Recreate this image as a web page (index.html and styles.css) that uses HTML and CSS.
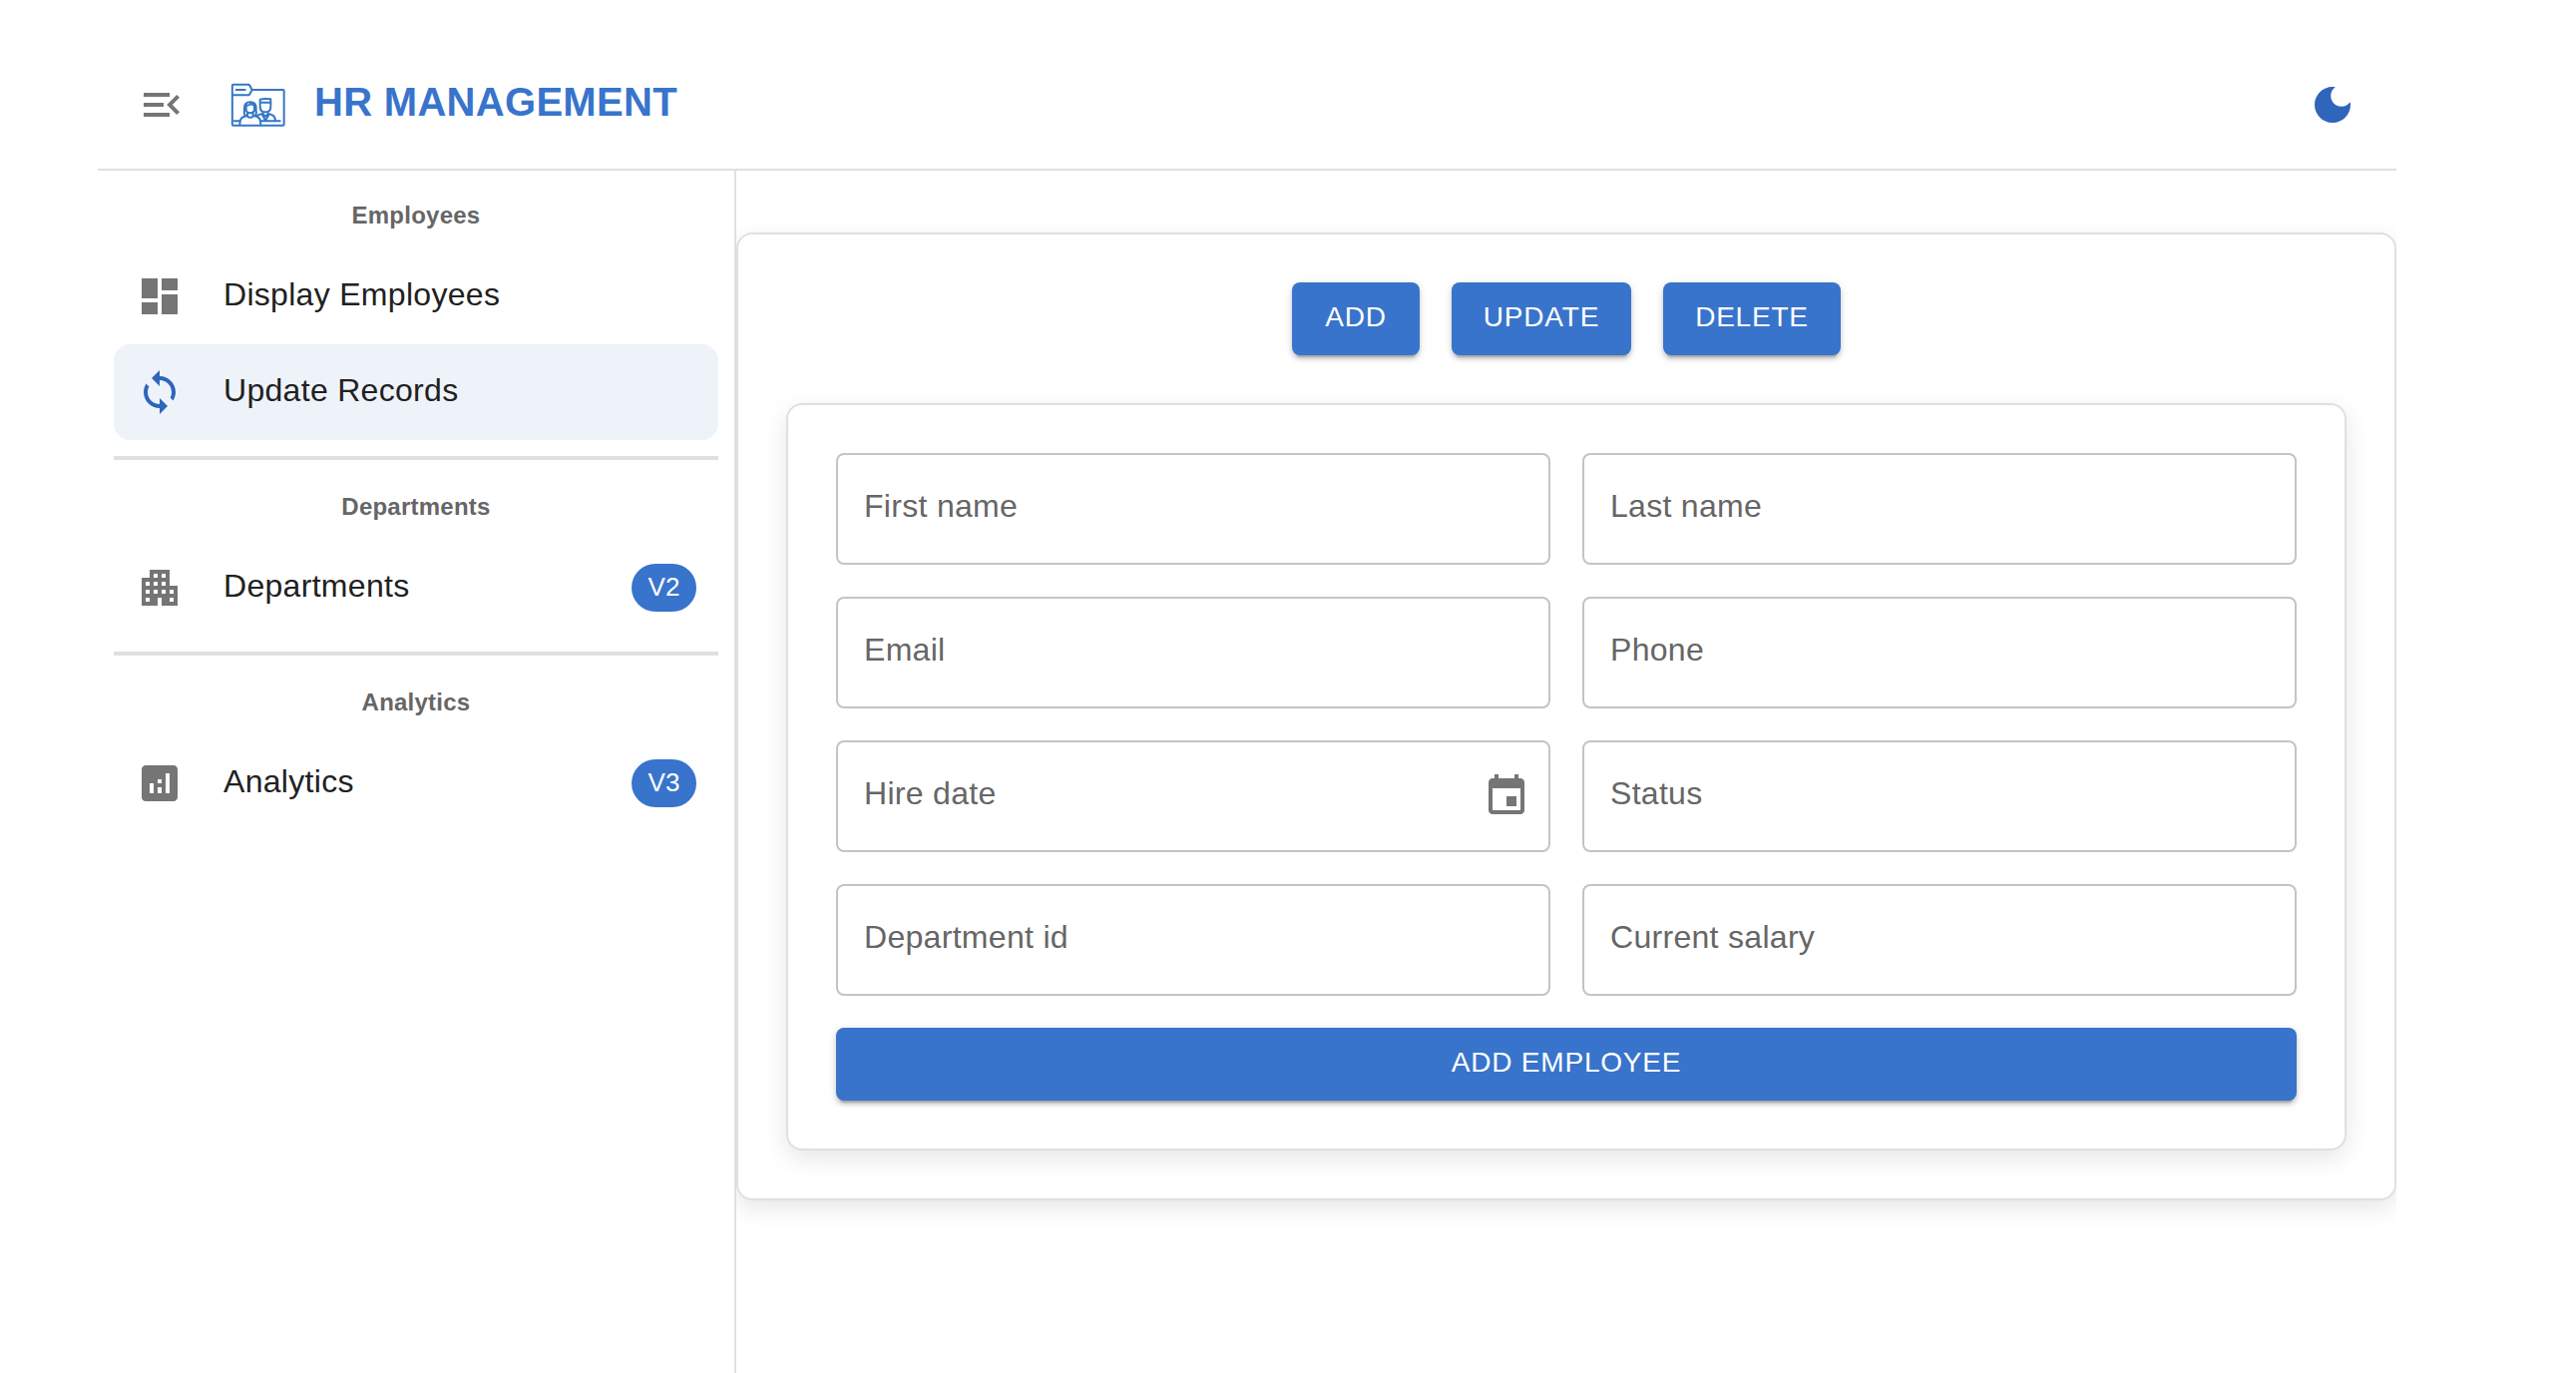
FILE: index.html
```html
<!DOCTYPE html>
<html lang="en">
<head>
<meta charset="utf-8">
<title>HR Management</title>
<link rel="stylesheet" href="styles.css">
</head>
<body>
<div class="app">
  <header class="topbar">
    <svg class="icon" viewBox="0 0 24 24"><path d="M3 18h13v-2H3v2zM3 13h10v-2H3v2zm0-7v2h13V6H3zm18 9.59L17.42 12 21 8.41 19.59 7l-5 5 5 5L21 15.59z"/></svg>
    <svg class="logo" viewBox="36 41 162 129">
      <path d="M38.500 75V163q0 3 3 3H191q3 0 3-3V62q0-3-3-3H98"/>
      <path d="M38.500 75V46q0-3 3-3H86q3 0 5 3l7 13l-7 13q-2 3-5 3H38.500zM50 59h27"/>
      <path d="M80 105q12 2 15-5q4 6 10 6V117q0 12-12.500 12T80 117zM78 137q-5-5-3-14V113q0-17 17.500-17T110 113v10q2 9-3 14M84 129v7q0 6 8.500 6t8.500-6v-7M61 165q0-18 8-23q4-3 15-5M101 137q12 2 16 5q7 5 7 23"/>
      <path d="M122 97V88q12-4 32-1V97H122v12q0 17 16 17t16-17V97M130 124v7l8 8l9-8v-7M113 137q4-4 17-6M147 131q21 3 21 21M130 136l8 16l9-16M44 153h16M126 153h56"/>
    </svg>
    <h1 class="brand">HR MANAGEMENT</h1>
    <svg class="icon moon" viewBox="0 0 24 24"><path d="M12 3c-4.970 0-9 4.030-9 9s4.030 9 9 9 9-4.030 9-9c0-.46-.04-.92-.1-1.360-.98 1.370-2.580 2.260-4.400 2.260-2.980 0-5.400-2.420-5.400-5.400 0-1.810.89-3.420 2.260-4.400-.44-.06-.9-.1-1.360-.1z"/></svg>
  </header>
  <div class="body">
    <nav class="sidebar">
      <h2 class="group first">Employees</h2>
      <a class="item">
        <svg class="icon" viewBox="0 0 24 24"><path d="M3 13h8V3H3v10zm0 8h8v-6H3v6zm10 0h8V11h-8v10zm0-18v6h8V3h-8z"/></svg>
        <span class="text">Display Employees</span>
      </a>
      <a class="item selected">
        <svg class="icon" viewBox="0 0 24 24"><path d="M12 4V1L8 5l4 4V6c3.310 0 6 2.690 6 6 0 1.010-.25 1.970-.7 2.800l1.460 1.460C19.540 15.030 20 13.570 20 12c0-4.420-3.580-8-8-8zm0 14c-3.310 0-6-2.690-6-6 0-1.010.25-1.970.7-2.800L5.240 7.740C4.460 8.970 4 10.430 4 12c0 4.420 3.580 8 8 8v3l4-4-4-4v3z"/></svg>
        <span class="text">Update Records</span>
      </a>
      <hr class="divider">
      <h2 class="group">Departments</h2>
      <a class="item">
        <svg class="icon" viewBox="0 0 24 24"><path d="M17 11V3H7v4H3v14h8v-4h2v4h8V11h-4zM7 19H5v-2h2v2zm0-4H5v-2h2v2zm0-4H5V9h2v2zm4 4H9v-2h2v2zm0-4H9V9h2v2zm0-4H9V5h2v2zm4 8h-2v-2h2v2zm0-4h-2V9h2v2zm0-4h-2V5h2v2zm4 12h-2v-2h2v2zm0-4h-2v-2h2v2z"/></svg>
        <span class="text">Departments</span>
        <span class="chip">V2</span>
      </a>
      <hr class="divider">
      <h2 class="group">Analytics</h2>
      <a class="item">
        <svg class="icon" viewBox="0 0 24 24"><path d="M19 3H5c-1.100 0-2 .9-2 2v14c0 1.100.9 2 2 2h14c1.100 0 2-.9 2-2V5c0-1.100-.9-2-2-2zM9 17H7v-5h2v5zm4 0h-2v-3h2v3zm0-5h-2v-2h2v2zm4 5h-2V7h2v10z"/></svg>
        <span class="text">Analytics</span>
        <span class="chip">V3</span>
      </a>
    </nav>
    <main class="content">
      <section class="card">
        <div class="actions">
          <button class="btn add">ADD</button>
          <button class="btn update">UPDATE</button>
          <button class="btn delete">DELETE</button>
        </div>
        <form class="card form">
          <label class="field">First name</label>
          <label class="field">Last name</label>
          <label class="field">Email</label>
          <label class="field">Phone</label>
          <label class="field">Hire date
            <svg class="icon" viewBox="0 0 24 24"><path d="M17 12h-5v5h5v-5zM16 1v2H8V1H6v2H5c-1.110 0-1.990.9-1.990 2L3 19c0 1.100.89 2 2 2h14c1.100 0 2-.9 2-2V5c0-1.100-.9-2-2-2h-1V1h-2zm3 18H5V8h14v11z"/></svg>
          </label>
          <label class="field">Status</label>
          <label class="field">Department id</label>
          <label class="field">Current salary</label>
          <button class="btn submit" type="button">ADD EMPLOYEE</button>
        </form>
      </section>
    </main>
  </div>
</div>
</body>
</html>
```
FILE: styles.css
```css
* { box-sizing: border-box; }
body {
  margin: 0;
  background: #fff;
  color: #212121;
  font-family: "Liberation Sans", Arial, sans-serif;
  font-size: 32px;
}
.app {
  width: 2304px;
  height: 1376px;
  margin-left: 98px;
  display: flex;
  flex-direction: column;
  overflow: hidden;
}
.icon { width: 48px; height: 48px; fill: #757575; flex: none; display: block; }

.topbar {
  height: 171px;
  flex: none;
  display: flex;
  align-items: flex-start;
  padding: 41px 40px 0;
  border-bottom: 2px solid #e0e0e0;
}
.topbar .icon { margin-top: 40px; }
.logo {
  width: 54px;
  height: 43px;
  margin: 42.500px 0 0 46px;
  overflow: visible;
  fill: none;
  stroke: #3477c6;
  stroke-width: 6;
  stroke-linejoin: round;
  stroke-linecap: round;
}
.brand {
  margin: 31px 0 0 29px;
  font-size: 40px;
  line-height: 60px;
  font-weight: 700;
  letter-spacing: 0.3px;
  color: #3874cb;
  white-space: nowrap;
}
.topbar .moon { margin-left: auto; fill: #2f65bb; }

.body { flex: 1; display: flex; min-height: 0; }
.sidebar {
  width: 640px;
  flex: none;
  padding: 0 16px;
  border-right: 2px solid #e0e0e0;
}
.group {
  margin: 0;
  height: 80px;
  padding-top: 14px;
  text-align: center;
  font-size: 24px;
  line-height: 66px;
  font-weight: 700;
  letter-spacing: 0.24px;
  color: #666;
}
.group.first { height: 78px; padding-top: 12px; }
.item {
  height: 96px;
  display: flex;
  align-items: center;
  padding: 0 22px;
  border-radius: 16px;
}
.item.selected { background: #eef3fa; }
.item.selected .icon { fill: #2f65bb; }
.text {
  flex: 1;
  margin-left: 40px;
  padding-bottom: 4px;
  line-height: 92px;
  letter-spacing: 0.3px;
}
.chip {
  width: 65px;
  height: 48px;
  padding-bottom: 2px;
  border-radius: 24px;
  background: #3874cb;
  color: #fff;
  text-align: center;
  font-size: 26px;
  line-height: 46px;
}
.divider { height: 4px; margin: 16px 0 0; border: 0; background: #e0e0e0; }

.content { flex: 1; min-width: 0; padding-top: 62px; overflow: hidden; }
.card {
  padding: 48px;
  border: 2px solid #e0e0e0;
  border-radius: 16px;
  background: #fff;
  box-shadow: 0 8px 24px rgba(0, 0, 0, 0.1);
}
.actions { display: flex; justify-content: center; gap: 32px; margin-bottom: 48px; }
.btn {
  height: 73px;
  padding: 0 0 3px;
  border: 0;
  border-radius: 8px;
  background: #3874cb;
  color: #fff;
  font: 28px/70px "Liberation Sans", Arial, sans-serif;
  letter-spacing: 0.8px;
  box-shadow: 0 6px 2px -4px rgba(0, 0, 0, 0.2), 0 4px 4px rgba(0, 0, 0, 0.14), 0 2px 10px rgba(0, 0, 0, 0.12);
}
.add { width: 128px; }
.update { width: 180px; }
.delete { width: 178px; }
.form { display: grid; grid-template-columns: 1fr 1fr; gap: 32px; }
.field {
  height: 112px;
  display: flex;
  justify-content: space-between;
  padding: 0 18px 0 26px;
  border: 2px solid #c4c4c4;
  border-radius: 8px;
  color: #666;
  line-height: 102px;
  letter-spacing: 0.3px;
}
.field .icon { align-self: center; }
.submit { grid-column: 1 / -1; }
```
